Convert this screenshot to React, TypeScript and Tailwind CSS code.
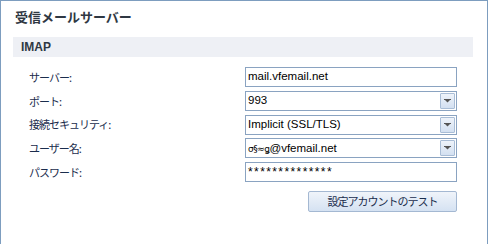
const jp = '"Noto Sans CJK JP", "Liberation Sans", sans-serif'

const rows = [
  { label: 'サーバー:', value: 'mail.vfemail.net', kind: 'text' },
  { label: 'ポート:', value: '993', kind: 'select' },
  { label: '接続セキュリティ:', value: 'Implicit (SSL/TLS)', kind: 'select' },
  { label: 'ユーザー名:', value: 'user', kind: 'select' },
  { label: 'パスワード:', value: '**************', kind: 'password' },
]

function DropButton() {
  return (
    <div className="mr-px flex h-[16px] w-[15px] items-center justify-center rounded-[1px] border border-[#a9bdd6] bg-gradient-to-b from-[#eef3fa] to-[#d3e0f1]">
      <svg width="7" height="4" viewBox="0 0 7 4">
        <rect x="0" y="0" width="7" height="1" fill="#555" />
        <polygon points="1,1 6,1 3.5,3.5" fill="#555" />
      </svg>
    </div>
  )
}

function Field({ value, kind }: { value: string; kind: string }) {
  return (
    <div className="flex h-[20px] w-[212px] items-center justify-between border border-[#8aa3c1] bg-white">
      {kind === 'password' ? (
        <span className="pl-[2px] font-['Liberation_Sans',sans-serif] text-[12px] tracking-[1.4px] text-black">{value}</span>
      ) : value === 'user' ? (
        <span className="pl-[2px] font-['Liberation_Sans',sans-serif] text-[11.5px] text-black">
          <span className="font-['DejaVu_Sans',sans-serif] text-[9px] tracking-[-0.5px]">σ§≈ǥ</span>@vfemail.net
        </span>
      ) : (
        <span className="pl-[2px] font-['Liberation_Sans',sans-serif] text-[11.5px] text-black">{value}</span>
      )}
      {kind === 'select' && <DropButton />}
    </div>
  )
}

export default function App() {
  return (
    <div className="h-[244px] w-[488px] overflow-hidden border-x border-t border-[#7d9dbf] bg-white">
      <h1
        className="pl-[14px] pt-[7px] text-[13px] font-bold leading-[18px] text-[#2f3843]"
        style={{ fontFamily: jp }}
      >
        受信メールサーバー
      </h1>
      <div className="ml-[12px] mr-[14px] mt-[11px] flex h-[20px] items-center bg-[#eef0f5] pl-[8px]">
        <span className="font-['Liberation_Sans',sans-serif] text-[12px] font-bold text-[#2f3843]">IMAP</span>
      </div>
      <div className="mt-[10px] flex flex-col gap-[3.75px] pl-[28px] pr-[30px]">
        {rows.map((r) => (
          <div key={r.label} className="flex items-center justify-between">
            <span className="text-[11px] tracking-[-1px] text-[#1b2d4d]" style={{ fontFamily: jp }}>
              {r.label}
            </span>
            <Field value={r.value} kind={r.kind} />
          </div>
        ))}
      </div>
      <div className="mt-[9px] flex justify-end pr-[30px]">
        <button
          className="flex h-[21px] w-[149px] items-center justify-center rounded-[2px] border border-[#a4b8d2] bg-gradient-to-b from-[#f0f4fa] to-[#d5e2f2] text-[11px] tracking-[-1px] text-[#1b2d4d]"
          style={{ fontFamily: jp }}
        >
          設定アカウントのテスト
        </button>
      </div>
    </div>
  )
}
